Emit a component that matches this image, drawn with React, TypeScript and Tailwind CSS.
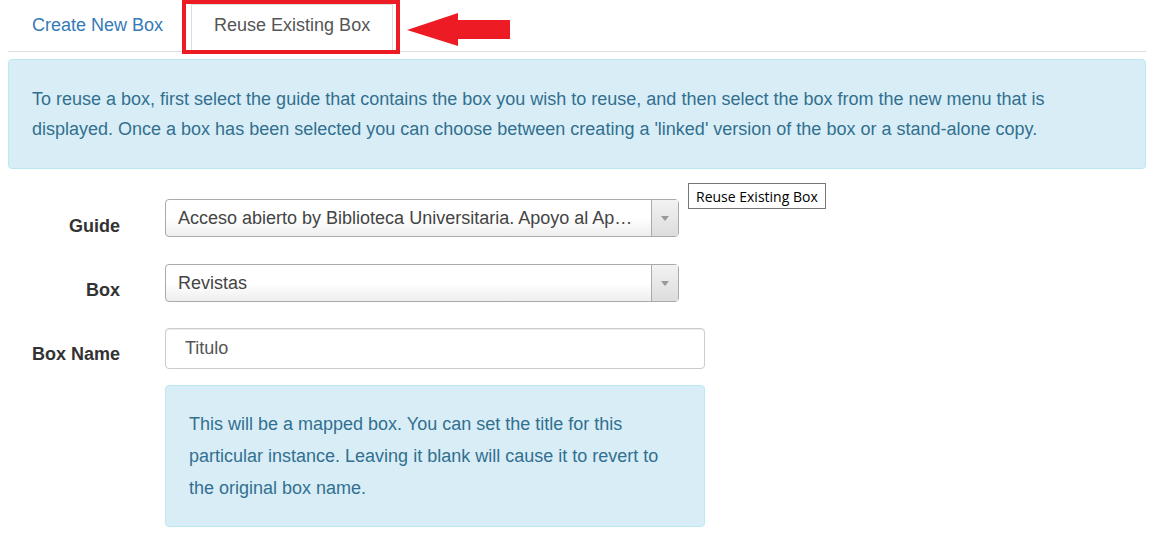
export default function App() {
  return (
    <div className="relative w-[1154px] h-[548px] overflow-hidden bg-white px-2 font-['Liberation_Sans',Arial,sans-serif] text-[18px] text-[#333]">
      {/* Tabs */}
      <div className="relative flex h-[52px] border-b border-[#ddd]">
        <a className="block pl-6 pr-[26px] pt-[13px] leading-6 text-[#337ab7]">Create New Box</a>
        <div className="mt-1 ml-[2px] h-[48px] border border-b-0 border-[#ddd] bg-white px-[22px] pt-[8px] leading-6 text-[#555]">
          Reuse Existing Box
        </div>

        {/* annotation */}
        <div className="absolute left-[174px] top-0 h-[54px] w-[218px] border-4 border-[#ed1c24]" />
        <svg className="absolute left-[398px] top-[13px]" width="106" height="34" viewBox="0 0 106 34">
          <polygon points="1,17 52,0 52,7 104,7 104,26 52,26 52,33" fill="#ed1c24" />
        </svg>
      </div>

      {/* Info alert */}
      <div className="mt-[7px] rounded border border-[#bce8f1] bg-[#d9edf7] px-[23px] py-6 leading-[30px] text-[#31708f]">
        <span className="block whitespace-nowrap">
          To reuse a box, first select the guide that contains the box you wish to reuse, and then select the box from the new menu that is
        </span>
        <span className="block whitespace-nowrap">
          displayed. Once a box has been selected you can choose between creating a 'linked' version of the box or a stand-alone copy.
        </span>
      </div>

      {/* Form */}
      <div className="mt-[30px] flex flex-col">
        <div className="flex items-start">
          <label className="w-[112px] pt-[15px] text-right font-bold leading-6">Guide</label>
          <Select value="Acceso abierto by Biblioteca Universitaria. Apoyo al Ap…" />
        </div>
        <div className="mt-[26px] flex items-start">
          <label className="w-[112px] pt-[14px] text-right font-bold leading-6">Box</label>
          <Select value="Revistas" />
        </div>
        <div className="mt-[26px] flex items-start">
          <label className="w-[112px] pt-[14px] text-right font-bold leading-6">Box Name</label>
          <div className="ml-[45px] flex h-[41px] w-[540px] items-center rounded border border-[#ccc] bg-white pl-[19px] shadow-[inset_0_1px_1px_rgba(0,0,0,0.075)] text-[#555]">
            Titulo
          </div>
        </div>
        <div className="mt-4 flex">
          <div className="ml-[157px] w-[540px] rounded border border-[#bce8f1] bg-[#d9edf7] px-[23px] pt-[22px] pb-[22px] leading-8 text-[#31708f]">
            This will be a mapped box. You can set the title for this
            <br />
            particular instance. Leaving it blank will cause it to revert to
            <br />
            the original box name.
          </div>
        </div>
      </div>

      {/* Tooltip */}
      <div className="absolute left-[688px] top-[183px] flex h-[26px] items-center border border-[#767676] bg-white px-[7px] font-['Open_Sans',sans-serif] text-[14px] text-black">
        Reuse Existing Box
      </div>
    </div>
  );
}

function Select({ value }: { value: string }) {
  return (
    <div className="ml-[45px] flex h-[38px] w-[514px] items-stretch rounded border border-[#aaa] bg-gradient-to-b from-white from-50% to-[#eee]">
      <div className="flex flex-1 items-center overflow-hidden whitespace-nowrap pl-3 text-[#444]">{value}</div>
      <div className="flex w-[27px] items-center justify-center border-l border-[#aaa] bg-gradient-to-b from-[#f2f2f2] to-[#ddd]">
        <svg width="8" height="5" viewBox="0 0 8 5">
          <polygon points="0,0 8,0 4,5" fill="#999" />
        </svg>
      </div>
    </div>
  );
}
